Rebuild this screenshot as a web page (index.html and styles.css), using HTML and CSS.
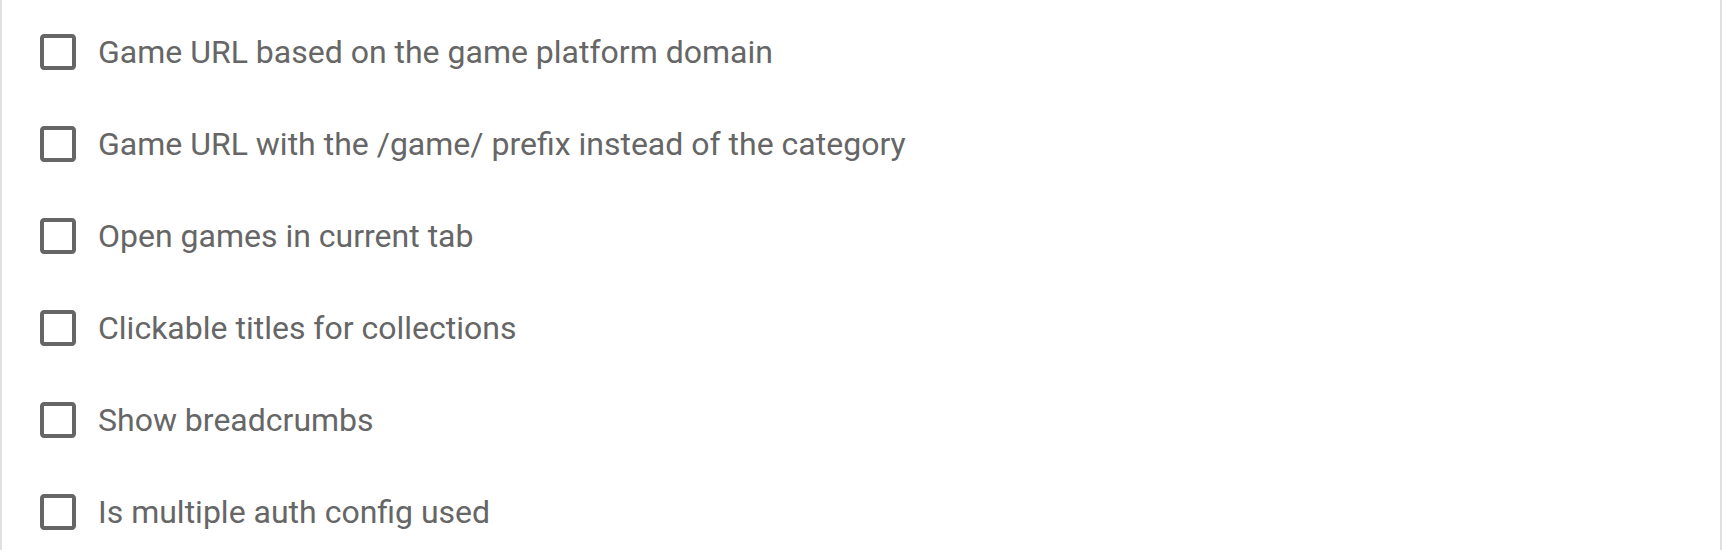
FILE: index.html
```html
<!DOCTYPE html>
<html lang="en">
<head>
<meta charset="utf-8">
<title>Settings</title>
<link rel="stylesheet" href="styles.css">
</head>
<body>
<div class="panel">
  <ul class="options">
    <li class="option">
      <svg class="box" viewBox="0 0 24 24"><path d="M19 5v14H5V5h14m0-2H5c-1.11 0-2 .9-2 2v14c0 1.1.89 2 2 2h14c1.1 0 2-.9 2-2V5c0-1.1-.9-2-2-2z"/></svg>
      <span class="label">Game URL based on the game platform domain</span>
    </li>
    <li class="option">
      <svg class="box" viewBox="0 0 24 24"><path d="M19 5v14H5V5h14m0-2H5c-1.11 0-2 .9-2 2v14c0 1.1.89 2 2 2h14c1.1 0 2-.9 2-2V5c0-1.1-.9-2-2-2z"/></svg>
      <span class="label">Game URL with the /game/ prefix instead of the category</span>
    </li>
    <li class="option">
      <svg class="box" viewBox="0 0 24 24"><path d="M19 5v14H5V5h14m0-2H5c-1.11 0-2 .9-2 2v14c0 1.1.89 2 2 2h14c1.1 0 2-.9 2-2V5c0-1.1-.9-2-2-2z"/></svg>
      <span class="label">Open games in current tab</span>
    </li>
    <li class="option">
      <svg class="box" viewBox="0 0 24 24"><path d="M19 5v14H5V5h14m0-2H5c-1.11 0-2 .9-2 2v14c0 1.1.89 2 2 2h14c1.1 0 2-.9 2-2V5c0-1.1-.9-2-2-2z"/></svg>
      <span class="label">Clickable titles for collections</span>
    </li>
    <li class="option">
      <svg class="box" viewBox="0 0 24 24"><path d="M19 5v14H5V5h14m0-2H5c-1.11 0-2 .9-2 2v14c0 1.1.89 2 2 2h14c1.1 0 2-.9 2-2V5c0-1.1-.9-2-2-2z"/></svg>
      <span class="label">Show breadcrumbs</span>
    </li>
    <li class="option">
      <svg class="box" viewBox="0 0 24 24"><path d="M19 5v14H5V5h14m0-2H5c-1.11 0-2 .9-2 2v14c0 1.1.89 2 2 2h14c1.1 0 2-.9 2-2V5c0-1.1-.9-2-2-2z"/></svg>
      <span class="label">Is multiple auth config used</span>
    </li>
  </ul>
</div>
</body>
</html>
```

FILE: styles.css
```css
html, body {
  margin: 0;
  padding: 0;
  background: #ffffff;
}

.panel {
  box-sizing: border-box;
  width: 1722px;
  height: 550px;
  border-left: 2px solid #e0e0e0;
  border-right: 2px solid #e0e0e0;
  padding: 6px 0 0 32px;
  overflow: hidden;
  font-family: Roboto, "Liberation Sans", sans-serif;
}

.options {
  list-style: none;
  margin: 0;
  padding: 0;
  display: flex;
  flex-direction: column;
}

.option {
  display: flex;
  align-items: center;
  height: 92px;
}

.box {
  width: 48px;
  height: 48px;
  flex: none;
  fill: #666666;
}

.label {
  margin-left: 16px;
  font-size: 32px;
  line-height: 1.5;
  color: #666666;
}
```
